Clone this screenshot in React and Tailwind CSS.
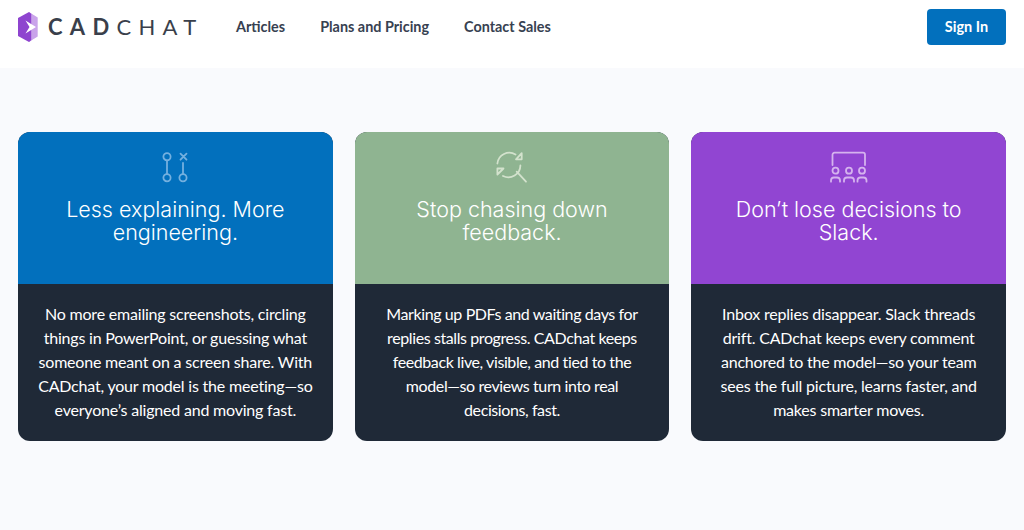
import React from "react";

const BODY = { fontFamily: '"Lato", "Liberation Sans", sans-serif' };

const NAV = ["Articles", "Plans and Pricing", "Contact Sales"];

function LogoMark() {
  return (
    <svg width="20" height="30" viewBox="0 0 20 30" className="shrink-0">
      <path d="M11 0 L19.5 5.5 V24.5 L11 30 Z" fill="#d3b5ee" />
      <path d="M11 0 L0 6 V24 L11 30 L13.5 28 V2 Z" fill="#8e44cf" />
      <path d="M13.5 2 L19.5 5.5 V24.5 L13.5 28 Z" fill="#c9a3ea" />
      <path d="M7.5 8.5 L18 15 L7.5 21.5 L11.5 15 Z" fill="#fff" />
    </svg>
  );
}

function PathsIcon() {
  return (
    <svg width="30" height="34" viewBox="0 0 30 34" fill="none" stroke="#74b0df" strokeWidth="1.8" strokeLinecap="round">
      <circle cx="7" cy="5.7" r="3.6" />
      <path d="M7 9.3 V23" />
      <circle cx="7" cy="26.7" r="3.6" />
      <path d="M20.5 2.7 L26.5 8.7 M26.5 2.7 L20.5 8.7" />
      <path d="M23 12 V23" />
      <circle cx="23" cy="26.7" r="3.6" />
    </svg>
  );
}

function ReviewIcon() {
  return (
    <svg width="34" height="34" viewBox="0 0 34 34" fill="none" stroke="#d3e2cd" strokeWidth="1.8" strokeLinecap="round" strokeLinejoin="round">
      <path d="M2.4 12.5 A12 12 0 0 1 20.5 3.5" />
      <path d="M26.7 2.2 V8.3 H21 Z" />
      <path d="M25.4 14.5 A12 12 0 0 1 8 25" />
      <path d="M2.4 17.5 H8.5 L2.4 23.5 Z" />
      <path d="M21.7 20.7 L31 30.7" />
    </svg>
  );
}

function MeetingIcon() {
  return (
    <svg width="38" height="32" viewBox="0 0 38 32" fill="none" stroke="#d5b3ee" strokeWidth="1.8" strokeLinecap="round">
      <path d="M2.5 14 V3.7 A2 2 0 0 1 4.5 1.7 H33 A2 2 0 0 1 35 3.7 V14" />
      <circle cx="5.5" cy="19.7" r="3" />
      <circle cx="19" cy="19.7" r="3" />
      <circle cx="32" cy="19.7" r="3" />
      <path d="M1 30.7 V29.5 A3 3 0 0 1 4 26.5 H7 A3 3 0 0 1 10 29.5 V30.7" />
      <path d="M14 30.7 V29.5 A3 3 0 0 1 17 26.5 H21 A3 3 0 0 1 24 29.5 V30.7" />
      <path d="M27.5 30.7 V29.5 A3 3 0 0 1 30.5 26.5 H33.5 A3 3 0 0 1 36.5 29.5 V30.7" />
    </svg>
  );
}

const CARDS = [
  {
    color: "bg-[#0270bd]",
    tracking: "tracking-[-0.2px]",
    icon: PathsIcon,
    title: ["Less explaining. More", "engineering."],
    lines: [
      "No more emailing screenshots, circling",
      "things in PowerPoint, or guessing what",
      "someone meant on a screen share. With",
      "CADchat, your model is the meeting—so",
      "everyone’s aligned and moving fast.",
    ],
  },
  {
    color: "bg-[#8fb491]",
    tracking: "tracking-[-0.4px]",
    icon: ReviewIcon,
    title: ["Stop chasing down", "feedback."],
    lines: [
      "Marking up PDFs and waiting days for",
      "replies stalls progress. CADchat keeps",
      "feedback live, visible, and tied to the",
      "model—so reviews turn into real",
      "decisions, fast.",
    ],
  },
  {
    color: "bg-[#9145d2]",
    tracking: "tracking-[-0.2px]",
    icon: MeetingIcon,
    title: ["Don’t lose decisions to", "Slack."],
    lines: [
      "Inbox replies disappear. Slack threads",
      "drift. CADchat keeps every comment",
      "anchored to the model—so your team",
      "sees the full picture, learns faster, and",
      "makes smarter moves.",
    ],
  },
];

export default function App() {
  return (
    <div className="min-h-[530px] bg-[#f9fafd]" style={BODY}>
      {/* Header */}
      <header className="h-[68px] bg-white flex items-start pt-[9px] px-[18px]">
        <div className="flex items-center gap-[10px] w-[218px] h-9">
          <LogoMark />
          <span className="text-[22px] leading-none tracking-[7.3px] text-[#3a3f4b] whitespace-nowrap">
            <span className="font-bold">CAD</span>
            <span>CHAT</span>
          </span>
        </div>
        <nav className="flex items-center gap-[35px] h-9">
          {NAV.map((n) => (
            <a key={n} className="text-[14.4px] font-bold text-[#374151]">{n}</a>
          ))}
        </nav>
        <button className="ml-auto w-[79px] h-9 rounded bg-[#0270bd] text-white text-[14.5px] font-bold">
          Sign In
        </button>
      </header>

      {/* Cards */}
      <main className="grid grid-cols-3 gap-[22px] px-[18px] pt-16">
        {CARDS.map(({ color, tracking, icon: Icon, title, lines }) => (
          <div key={title[0]} className="rounded-xl overflow-hidden bg-[#1f2937]">
            <div className={`${color} h-[152px] flex flex-col items-center pt-[19px] text-white`}>
              <div className="h-[47px]"><Icon /></div>
              <h3 className="text-center text-[21.5px] leading-[23px]" style={{ fontFamily: '"Inter", sans-serif', fontWeight: 300 }}>
                {title.map((t) => <span key={t} className="block">{t}</span>)}
              </h3>
            </div>
            <div className={`${tracking} h-[157px] pt-[18px] text-center text-white text-[16px] leading-6`}>
              {lines.map((l) => <span key={l} className="block">{l}</span>)}
            </div>
          </div>
        ))}
      </main>
    </div>
  );
}
